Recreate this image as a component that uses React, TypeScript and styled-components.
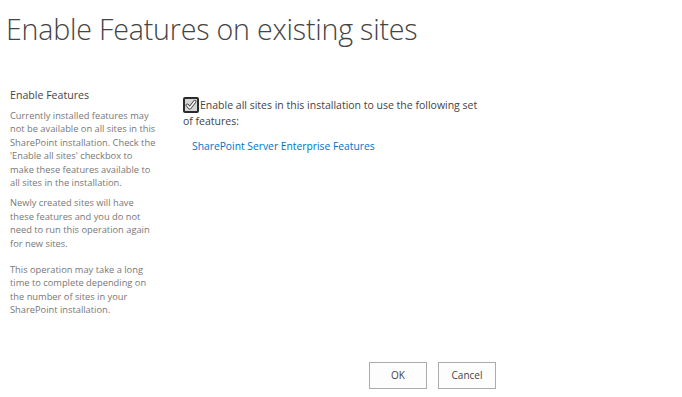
import styled, { createGlobalStyle } from "styled-components";

const GlobalStyle = createGlobalStyle`
  html, body {
    margin: 0;
    padding: 0;
    background: #ffffff;
  }
  body {
    font-family: "Open Sans", "Noto Sans", sans-serif;
    color: #444444;
  }
`;

const Page = styled.div`
  width: 682px;
  height: 397px;
  overflow: hidden;
`;

const Title = styled.h1`
  margin: 0;
  padding: 9px 0 0 6px;
  font-size: 28.6px;
  line-height: 40px;
  font-weight: 300;
  color: #444444;
  letter-spacing: -0.2px;
`;

const Form = styled.div`
  width: 496px;
  padding-top: 38px;
`;

const Section = styled.div`
  display: flex;
  align-items: flex-start;
`;

const DescColumn = styled.div`
  width: 183px;
  padding-left: 10px;
  box-sizing: border-box;
`;

const DescHeading = styled.h3`
  margin: 0 0 6px 0;
  font-size: 10.6px;
  line-height: 16px;
  font-weight: 400;
  color: #444444;
`;

const DescText = styled.p<{ $gap: number }>`
  margin: 0 0 ${(p) => p.$gap}px 0;
  font-size: 9.3px;
  line-height: 13.4px;
  color: #777777;
  white-space: nowrap;
`;

const FieldColumn = styled.div`
  flex: 1;
  padding-top: 10px;
`;

const CheckRow = styled.label`
  display: block;
  font-size: 10.5px;
  line-height: 16px;
  color: #444444;
`;

const CheckBox = styled.span`
  display: inline-block;
  width: 12px;
  height: 12px;
  border: 2px solid #2b2b2b;
  border-radius: 2px;
  background: #d6d6d6;
  vertical-align: -4px;
  margin-right: 1px;
  position: relative;
  box-sizing: content-box;
  svg {
    position: absolute;
    left: 0;
    top: 0;
  }
`;

const FeatureLink = styled.a`
  display: block;
  margin: 9px 0 0 9px;
  font-size: 10.3px;
  line-height: 16px;
  color: #0072c6;
  text-decoration: none;
`;

const ButtonRow = styled.div`
  display: flex;
  justify-content: flex-end;
  gap: 11px;
  margin-top: 45px;
`;

const Button = styled.button`
  width: 58px;
  height: 27px;
  padding: 0;
  border: 1px solid #ababab;
  background: #fdfdfd;
  font-family: "Open Sans", "Noto Sans", sans-serif;
  font-size: 10px;
  color: #444444;
`;

export default function App() {
  return (
    <Page>
      <GlobalStyle />
      <Title>Enable Features on existing sites</Title>
      <Form>
        <Section>
          <DescColumn>
            <DescHeading>Enable Features</DescHeading>
            <DescText $gap={7}>
              Currently installed features may<br />
              not be available on all sites in this<br />
              SharePoint installation. Check the<br />
              'Enable all sites' checkbox to<br />
              make these features available to<br />
              all sites in the installation.
            </DescText>
            <DescText $gap={13}>
              Newly created sites will have<br />
              these features and you do not<br />
              need to run this operation again<br />
              for new sites.
            </DescText>
            <DescText $gap={0}>
              This operation may take a long<br />
              time to complete depending on<br />
              the number of sites in your<br />
              SharePoint installation.
            </DescText>
          </DescColumn>
          <FieldColumn>
            <CheckRow>
              <CheckBox>
                <svg width="12" height="12" viewBox="0 0 12 12">
                  <path d="M2.2 6.2 L4.8 8.9 L9.8 2.6" fill="none" stroke="#3a3a3a" strokeWidth="3.2" strokeLinecap="round" strokeLinejoin="round" />
                  <path d="M2.2 6.2 L4.8 8.9 L9.8 2.6" fill="none" stroke="#ffffff" strokeWidth="1.6" strokeLinecap="round" strokeLinejoin="round" />
                </svg>
              </CheckBox>
              Enable all sites in this installation to use the following set<br />
              of features:
            </CheckRow>
            <FeatureLink href="#">SharePoint Server Enterprise Features</FeatureLink>
          </FieldColumn>
        </Section>
        <ButtonRow>
          <Button>OK</Button>
          <Button>Cancel</Button>
        </ButtonRow>
      </Form>
    </Page>
  );
}
